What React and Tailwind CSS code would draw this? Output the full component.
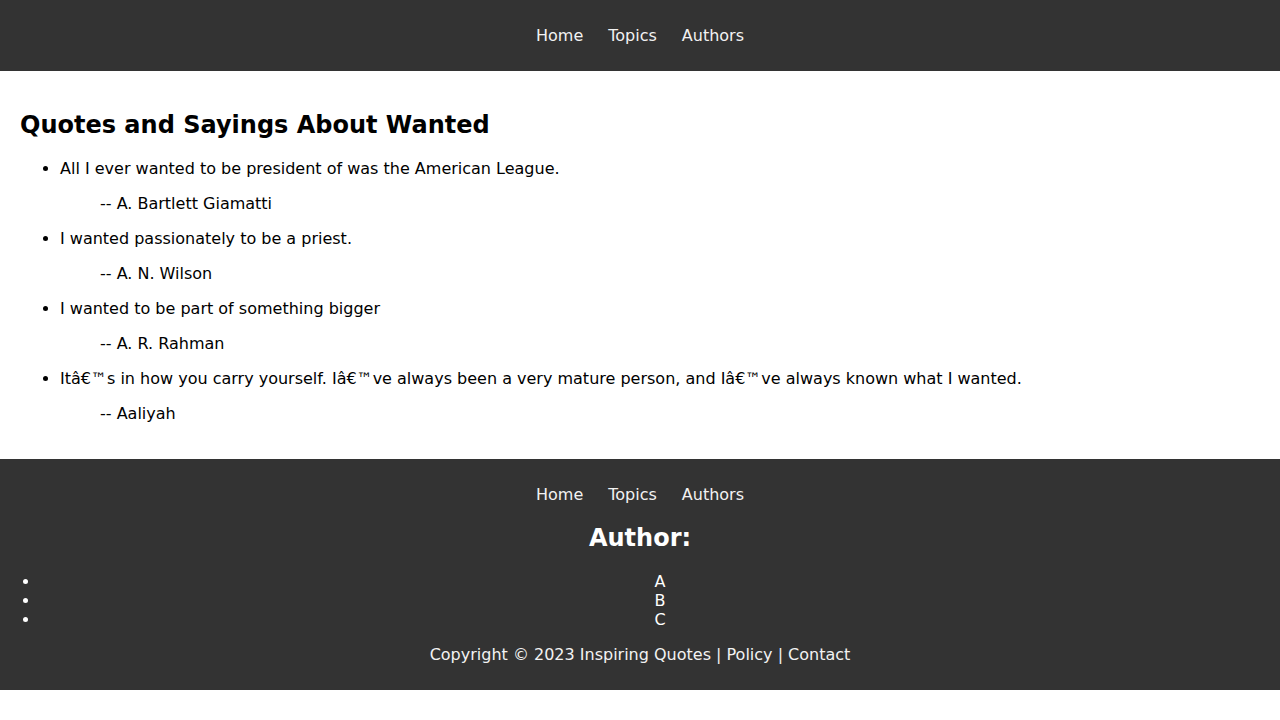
const quotes = [
  { text: "All I ever wanted to be president of was the American League.", author: "A. Bartlett Giamatti" },
  { text: "I wanted passionately to be a priest.", author: "A. N. Wilson" },
  { text: "I wanted to be part of something bigger", author: "A. R. Rahman" },
  {
    text: "Itâ€™s in how you carry yourself. Iâ€™ve always been a very mature person, and Iâ€™ve always known what I wanted.",
    author: "Aaliyah",
  },
];

const NavLinks = () => (
  <nav className="flex justify-center gap-[25px] leading-[19px] text-[#f2f2f2]">
    <a href="#">Home</a>
    <a href="#">Topics</a>
    <a href="#">Authors</a>
  </nav>
);

export default function App() {
  return (
    <div className="font-['DejaVu_Sans',sans-serif] text-base text-black bg-white">
      <header className="h-[71px] bg-[#333333] text-white flex items-center justify-center">
        <NavLinks />
      </header>

      <main className="p-5">
        <h2 className="text-2xl font-bold leading-[28px] my-5">Quotes and Sayings About Wanted</h2>
        <ul className="list-disc pl-10 mb-4">
          {quotes.map((q) => (
            <li key={q.author} className="leading-[19px]">
              {q.text}
              <p className="mx-10 my-4">-- {q.author}</p>
            </li>
          ))}
        </ul>
      </main>

      <footer className="bg-[#333333] text-white text-center py-[26px]">
        <NavLinks />
        <h2 className="text-2xl font-bold leading-[28px] mt-5 mb-5">Author:</h2>
        <ul className="list-disc pl-10 leading-[19px]">
          <li>A</li>
          <li>B</li>
          <li>C</li>
        </ul>
        <p className="mt-4 leading-[19px] text-[#f2f2f2]">Copyright © 2023 Inspiring Quotes | Policy | Contact</p>
      </footer>
    </div>
  );
}
